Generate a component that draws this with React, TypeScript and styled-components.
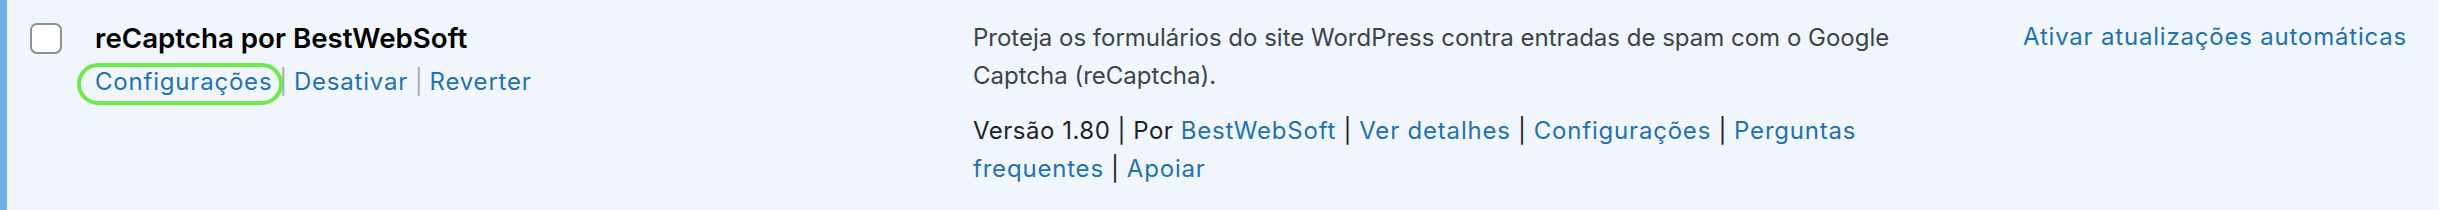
import React from 'react';
import styled, { createGlobalStyle } from 'styled-components';

const GlobalStyle = createGlobalStyle`
  html, body {
    margin: 0;
    padding: 0;
    background: #f0f6fc;
  }
  body {
    font-family: Inter, "Noto Sans", "Liberation Sans", sans-serif;
    color: #3c434a;
  }
`;

const Row = styled.div`
  display: grid;
  grid-template-columns: 88px 878px 1050px 1fr;
  min-height: 210px;
  box-sizing: border-box;
  border-left: 7px solid #72aee6;
  background: #f0f6fc;
`;

const CheckCell = styled.div`
  padding: 23px 0 0 23px;
`;

const Checkbox = styled.span`
  display: block;
  width: 32px;
  height: 31px;
  box-sizing: border-box;
  border: 2px solid #8c8f94;
  border-radius: 7px;
  background: #fff;
`;

const TitleCell = styled.div`
  padding-top: 20px;
`;

const Title = styled.strong`
  display: block;
  font-size: 27.7px;
  line-height: 37px;
  font-weight: 600;
  color: #000;
`;

const Actions = styled.div`
  margin-top: 5px;
  font-size: 24px;
  line-height: 40px;
  color: #a7aaad;
`;

const Link = styled.a<{ $ring?: boolean }>`
  position: relative;
  color: #2271b1;
  text-decoration: none;
  letter-spacing: 0.8px;

  ${(p) =>
    p.$ring &&
    `
    &::after {
      content: '';
      position: absolute;
      left: -18px;
      right: -11px;
      top: -4px;
      bottom: -9px;
      border: 4px solid #6ee94a;
      border-radius: 21px;
    }
  `}
`;

const DescCell = styled.div`
  padding: 19px 61px 0 0;
  font-size: 24px;
`;

const Desc = styled.p`
  margin: 0;
  line-height: 38px;
  color: #3c434a;
`;

const Meta = styled.p`
  margin: 17px 0 0;
  line-height: 38px;
  letter-spacing: 0.5px;
  color: #1d2327;
`;

const AutoCell = styled.div`
  padding-top: 18px;
  font-size: 24px;
  line-height: 38px;
`;

const Sep = () => <> | </>;

export default function App() {
  return (
    <>
      <GlobalStyle />
      <Row>
        <CheckCell>
          <Checkbox />
        </CheckCell>
        <TitleCell>
          <Title>reCaptcha por BestWebSoft</Title>
          <Actions>
            <Link href="#" $ring>Configurações</Link>
            <Sep />
            <Link href="#">Desativar</Link>
            <Sep />
            <Link href="#">Reverter</Link>
          </Actions>
        </TitleCell>
        <DescCell>
          <Desc>
            Proteja os formulários do site WordPress contra entradas de spam com o Google Captcha (reCaptcha).
          </Desc>
          <Meta>
            Versão 1.80<Sep />Por <Link href="#">BestWebSoft</Link>
            <Sep />
            <Link href="#">Ver detalhes</Link>
            <Sep />
            <Link href="#">Configurações</Link>
            <Sep />
            <Link href="#">Perguntas frequentes</Link>
            <Sep />
            <Link href="#">Apoiar</Link>
          </Meta>
        </DescCell>
        <AutoCell>
          <Link href="#">Ativar atualizações automáticas</Link>
        </AutoCell>
      </Row>
    </>
  );
}
